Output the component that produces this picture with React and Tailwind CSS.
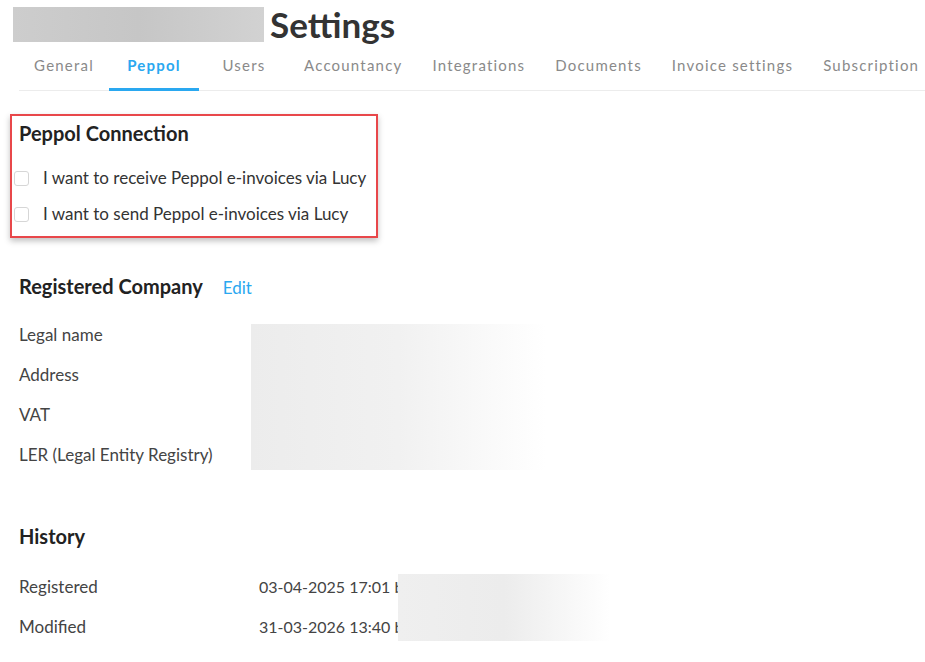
import { useState } from 'react'

const tabs = ['General', 'Peppol', 'Users', 'Accountancy', 'Integrations', 'Documents', 'Invoice settings', 'Subscription']

const font = { fontFamily: 'Lato, "Open Sans", sans-serif' }

function Checkbox({ label }) {
  const [checked, setChecked] = useState(false)
  return (
    <label className="flex items-center h-[36px] pl-[2px] cursor-pointer">
      <span
        onClick={() => setChecked((c) => !c)}
        className={`w-[15px] h-[15px] rounded-[3px] border ${checked ? 'bg-[#2aa8f0] border-[#2aa8f0]' : 'border-[#d6d6d6] bg-white'}`}
      />
      <span className="ml-[14px] text-[17px] text-[#333]">{label}</span>
    </label>
  )
}

export default function App() {
  const [active, setActive] = useState('Peppol')

  return (
    <div className="w-[925px] h-[662px] bg-white overflow-hidden" style={font}>
      {/* Header */}
      <div className="flex items-center pt-[7px]">
        <div className="ml-[13px] w-[251px] h-[35px] bg-gradient-to-r from-[#cdcdcd] via-[#c6c6c6] to-[#d2d2d2]" />
        <h1 className="ml-[6px] text-[35px] leading-[35px] font-bold text-[#333]">Settings</h1>
      </div>

      {/* Tabs */}
      <div className="ml-[19px] mt-[6px] flex border-b border-[#ececec]">
        {tabs.map((t) => {
          const isActive = t === active
          return (
            <button
              key={t}
              onClick={() => setActive(t)}
              className={`shrink-0 whitespace-nowrap min-w-[90px] px-[15px] h-[43px] pb-[6px] text-center text-[15px] tracking-[1.2px] border-b-[3px] -mb-px ${
                isActive ? 'border-[#2aa8f0] text-[#2aa8f0] font-bold' : 'border-transparent text-[#8a8a8a]'
              }`}
            >
              {t}
            </button>
          )
        })}
      </div>

      {/* Peppol connection */}
      <div className="ml-[10px] mt-[23px] w-[368px] h-[124px] border-2 border-[#e8474a] shadow-[0_3px_6px_rgba(0,0,0,0.25)]">
        <h2 className="pl-[7px] pt-[3px] text-[20px] leading-[28px] font-bold text-[#222]">Peppol Connection</h2>
        <div className="mt-[13px]">
          <Checkbox label="I want to receive Peppol e-invoices via Lucy" />
          <Checkbox label="I want to send Peppol e-invoices via Lucy" />
        </div>
      </div>

      {/* Registered company */}
      <div className="pl-[19px] mt-[34px]">
        <div className="flex items-baseline">
          <h2 className="text-[20px] leading-[28px] font-bold text-[#222]">Registered Company</h2>
          <a href="#" className="ml-[20px] text-[17px] text-[#2aa8f0]">Edit</a>
        </div>
        <div className="mt-[14px] grid grid-cols-[232px_295px] grid-rows-[40px_40px_40px_40px] text-[17px] text-[#444]">
          <div className="flex items-center">Legal name</div>
          <div className="row-span-4 mt-[9px] mb-[5px] bg-gradient-to-r from-[#ececec] via-[#f1f1f1] to-white" />
          <div className="flex items-center">Address</div>
          <div className="flex items-center">VAT</div>
          <div className="flex items-center">LER (Legal Entity Registry)</div>
        </div>
      </div>

      {/* History */}
      <div className="pl-[19px] mt-[47px]">
        <h2 className="text-[20px] leading-[28px] font-bold text-[#222]">History</h2>
        <div className="relative mt-[17px] grid grid-cols-[240px_1fr] grid-rows-[40px_40px] text-[17px] text-[#444]">
          <div className="flex items-center">Registered</div>
          <div className="flex items-center text-[16px]">03-04-2025 17:01 by</div>
          <div className="flex items-center">Modified</div>
          <div className="flex items-center text-[16px]">31-03-2026 13:40 by</div>
          <div className="absolute left-[379px] top-[7px] w-[212px] h-[67px] bg-gradient-to-r from-[#efefef] via-[#ececec] to-white" />
        </div>
      </div>
    </div>
  )
}
